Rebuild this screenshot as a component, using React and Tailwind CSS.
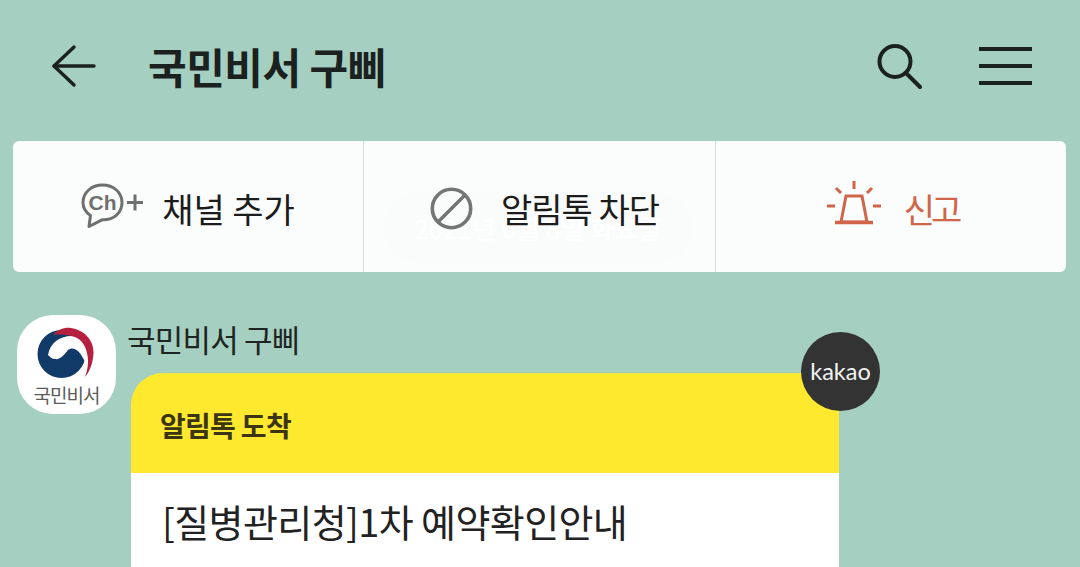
const font = { fontFamily: '"Noto Sans CJK KR", "Noto Sans", sans-serif' };

function BackIcon() {
  return (
    <svg width="46" height="44" viewBox="0 0 46 44" fill="none" stroke="#1a211f" strokeWidth="3.4" strokeLinecap="round" strokeLinejoin="round">
      <path d="M23 3 L3 22 L23 41" />
      <path d="M3 22 H43" />
    </svg>
  );
}

function SearchIcon() {
  return (
    <svg width="48" height="48" viewBox="0 0 48 48" fill="none" stroke="#1a211f" strokeWidth="4" strokeLinecap="round">
      <circle cx="20" cy="19.5" r="15.5" />
      <path d="M31 31 L45 45" />
    </svg>
  );
}

function ChannelIcon() {
  return (
    <svg width="63" height="46" viewBox="0 0 63 46" fill="none">
      <path d="M21.500 2 C10.500 2 2 9.500 2 19.500 C2 25.500 5 29.500 9.500 32.500 L8 43.500 L21 36.800 C33 37.500 41 29.500 41 19.500 C41 9.500 32.500 2 21.500 2 Z" stroke="#6f6f6f" strokeWidth="3" strokeLinejoin="round" />
      <text x="21.500" y="26.500" textAnchor="middle" fontFamily="Liberation Sans, sans-serif" fontWeight="700" fontSize="21" fill="#6f6f6f">Ch</text>
      <path d="M46 19.500 H62 M54 11.500 V27.500" stroke="#6f6f6f" strokeWidth="3" />
    </svg>
  );
}

function BlockIcon() {
  return (
    <svg width="43" height="43" viewBox="0 0 43 43" fill="none" stroke="#757575" strokeWidth="3.600">
      <circle cx="21.500" cy="21.500" r="19.200" />
      <path d="M8 35 L35 8" />
    </svg>
  );
}

function SirenIcon() {
  return (
    <svg width="54" height="44" viewBox="0 0 54 44" fill="none" stroke="#d0654a" strokeWidth="3">
      <path d="M27 0 V8 M9 7 L14 12 M45 7 L40 12 M0 25 H8 M46 25 H54" />
      <path d="M19 15 H35 L40 41 H14 Z" />
      <path d="M8 41.500 H46" strokeWidth="3.400" />
    </svg>
  );
}

function ChannelLogo() {
  return (
    <div className="relative h-[99px] w-[99px] shrink-0 rounded-[36px] bg-white">
      <svg width="99" height="99" viewBox="0 0 99 99" className="absolute inset-0">
        <circle cx="44.500" cy="39" r="24" fill="#123a68" />
        <path d="M31 40 C33 28 43 20 57 21 C66 23 72 31 71 42 L71 52 L66 43 C62 35 56 31 51 35 C47 40 43 45 38 44 C35 44 33 42 31 40 Z" fill="#ffffff" />
        <path d="M36 20 C41 14 48 12 54 13 C67 15 77 25 76.500 38 C76 48 73 56 68 62 C71 54 72 46 70 38 C68 29 63 23 56 21.500 C49 19.500 42 19 36 20 Z" fill="#b5203f" />
      </svg>
      <span className="absolute inset-x-0 top-[67px] text-center text-[19px] leading-[26px] tracking-[-1px] text-[#5c5c5c]" style={font}>
        국민비서
      </span>
    </div>
  );
}

function ActionCell({ icon, label, cellClass, iconClass, labelClass = 'text-[#1c1c1c]', border = true }) {
  return (
    <div className={`relative z-10 flex h-full items-center justify-center ${cellClass} ${border ? 'border-r border-[#d5dcd9]' : ''}`}>
      <div className={iconClass}>{icon}</div>
      <span className={`pt-[5px] text-[34px] leading-none ${labelClass}`} style={font}>{label}</span>
    </div>
  );
}

export default function App() {
  return (
    <div className="h-[567px] w-[1080px] overflow-hidden bg-[#a5cfc0]" style={font}>
      <header className="flex h-[141px] items-center pb-[9px] pl-[51px] pr-[48px]">
        <BackIcon />
        <h1 className="ml-[51px] flex-1 text-[42px] font-bold leading-none tracking-[-0.5px] text-[#1a211f]">국민비서 구삐</h1>
        <SearchIcon />
        <div className="ml-[56px] flex h-[38px] w-[53px] flex-col justify-between">
          <div className="h-[4px] bg-[#1a211f]" />
          <div className="h-[4px] bg-[#1a211f]" />
          <div className="h-[4px] bg-[#1a211f]" />
        </div>
      </header>

      <section className="relative mx-[13px] grid h-[131px] w-[1053px] grid-cols-[351px_352px_350px] items-center rounded-[6px] bg-[#fbfdfc]">
        <div className="absolute left-[370px] top-[51px] flex h-[71px] w-[310px] items-center justify-center rounded-full bg-[#fafcfb] text-[26px] text-white">
          2021년 6월 8일 화요일
        </div>
        <ActionCell icon={<ChannelIcon />} label="채널 추가" cellClass="gap-[18px]" iconClass="mb-[1px]" />
        <ActionCell icon={<BlockIcon />} label="알림톡 차단" cellClass="gap-[28px] pl-[10px]" iconClass="mb-[-3px]" labelClass="tracking-[-1px] text-[#1c1c1c]" />
        <ActionCell icon={<SirenIcon />} label="신고" cellClass="gap-[23px] pl-[3px]" iconClass="mb-[7px]" labelClass="tracking-[-4px] text-[#d0654a]" border={false} />
      </section>

      <section className="flex gap-[13px] pl-[17px] pt-[43px]">
        <ChannelLogo />
        <div className="min-w-0">
          <p className="-ml-[2px] text-[31px] leading-[50px] tracking-[-0.8px] text-[#1e2422]" style={{ marginTop: '-1px' }}>국민비서 구삐</p>
          <div className="relative ml-[2px] mt-[9px] w-[708px]">
            <div className="h-[100px] rounded-t-[32px] bg-[#ffe92f] pl-[29px] pt-[28px] text-[28px] font-semibold leading-[48px] tracking-[-0.7px] text-[#3b3514]">
              알림톡 도착
            </div>
            <div className="h-[120px] bg-white pl-[31px] pt-[21px] text-[38px] leading-[54px] tracking-[-0.6px] text-[#222222]">
              [질병관리청]1차 예약확인안내
            </div>
            <div className="absolute -right-[41px] -top-[41px] flex h-[79px] w-[79px] items-center justify-center rounded-full bg-[#333333] text-[23.5px] text-[#f3f3f3]" style={{ fontFamily: 'Lato, sans-serif' }}>
              kakao
            </div>
          </div>
        </div>
      </section>
    </div>
  );
}
